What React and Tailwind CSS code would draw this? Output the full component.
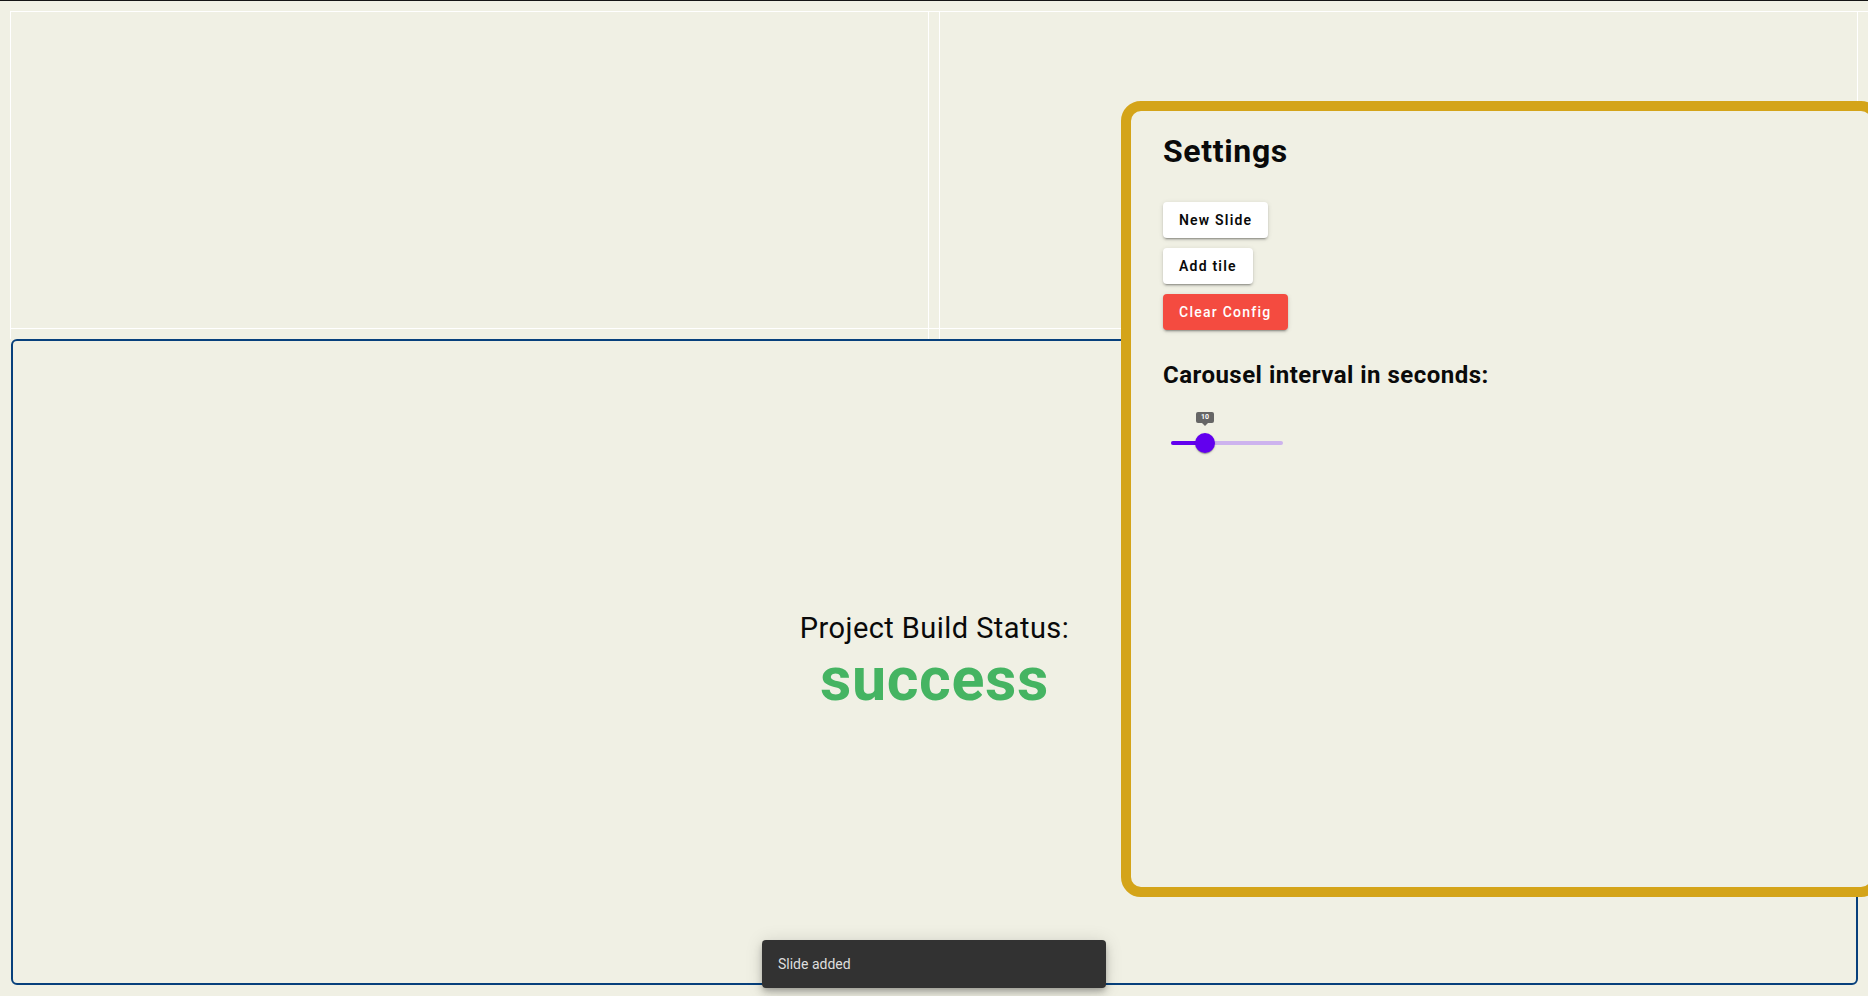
import { useState } from "react";

export default function App() {
  const [interval] = useState(10);

  return (
    <div className="relative h-[996px] w-full overflow-hidden border-t border-[#141414] bg-[#f0f0e4] font-['Roboto',sans-serif]">
      {/* Tile grid outline */}
      <div className="ml-[10px] mt-[10px] border-t border-white">
        <div className="flex gap-[10px]">
          <div className="h-[316px] w-[919px] border-x border-white" />
          <div className="h-[316px] w-[919px] border-x border-white" />
        </div>
        <div className="h-px w-[1848px] bg-white" />
        <div className="flex gap-[10px]">
          <div className="h-[10px] w-[919px] border-x border-white" />
          <div className="h-[10px] w-[919px] border-x border-white" />
        </div>
      </div>

      {/* Build status tile */}
      <div className="ml-[11px] flex h-[646px] w-[1847px] items-center justify-center rounded-[6px] border-2 border-[#07407c]">
        <div className="flex flex-col items-center pb-[8px]">
          <span className="text-[29px] leading-[42px] tracking-[0.015em] text-[#0a0a0a]">Project Build Status:</span>
          <span className="text-[61px] font-bold leading-[60px] tracking-[0.01em] text-[#45b462]">success</span>
        </div>
      </div>

      {/* Settings panel */}
      <div className="absolute left-[1121px] top-[100px] h-[796px] w-[760px] rounded-[20px] border-[10px] border-[#d4a419] bg-[#f0f0e4] pl-[32px] pt-[21px]">
        <h2 className="text-[32px] font-bold leading-[38px] tracking-[0.02em] text-[#0a0a0a]">Settings</h2>

        <div className="mt-[32px] flex flex-col items-start gap-[10px]">
          <button className="h-[36px] rounded-[4px] bg-white px-[16px] text-[14px] font-semibold tracking-[1.2px] text-[#0a0a0a] shadow-[0_3px_1px_-2px_rgba(0,0,0,0.2),0_2px_2px_0_rgba(0,0,0,0.14),0_1px_5px_0_rgba(0,0,0,0.12)]">
            New Slide
          </button>
          <button className="h-[36px] rounded-[4px] bg-white px-[16px] text-[14px] font-semibold tracking-[1.2px] text-[#0a0a0a] shadow-[0_3px_1px_-2px_rgba(0,0,0,0.2),0_2px_2px_0_rgba(0,0,0,0.14),0_1px_5px_0_rgba(0,0,0,0.12)]">
            Add tile
          </button>
          <button className="h-[36px] rounded-[4px] bg-[#f44b40] px-[16px] text-[14px] font-medium tracking-[1.25px] text-white shadow-[0_3px_1px_-2px_rgba(0,0,0,0.2),0_2px_2px_0_rgba(0,0,0,0.14),0_1px_5px_0_rgba(0,0,0,0.12)]">
            Clear Config
          </button>
        </div>

        <h3 className="mt-[31px] text-[24px] font-bold leading-[28px] tracking-[0.02em] text-[#0a0a0a]">
          Carousel interval in seconds:
        </h3>

        {/* Slider */}
        <div className="relative ml-[8px] mt-[23px] h-[42px] w-[112px]">
          <div className="absolute left-[25px] top-0 flex flex-col items-center">
            <div className="flex h-[11px] w-[18px] items-center justify-center rounded-[2px] bg-[#666] text-[7px] font-bold leading-none text-white">
              {interval}
            </div>
            <div className="h-0 w-0 border-x-[3px] border-t-[3px] border-x-transparent border-t-[#666]" />
          </div>
          <div className="absolute left-0 top-[29px] h-[4px] w-[112px] rounded-full bg-[#cdb3ee]" />
          <div className="absolute left-0 top-[29px] h-[4px] w-[34px] rounded-full bg-[#6200ee]" />
          <div className="absolute left-[24px] top-[21px] h-[20px] w-[20px] rounded-full bg-[#6200ee] shadow-[0_2px_1px_-1px_rgba(0,0,0,0.2),0_1px_1px_0_rgba(0,0,0,0.14),0_1px_3px_0_rgba(0,0,0,0.12)]" />
        </div>
      </div>

      {/* Snackbar */}
      <div className="absolute bottom-[8px] left-1/2 flex h-[48px] w-[344px] -translate-x-1/2 items-center rounded-[4px] bg-[#323232] px-[16px] text-[14px] text-[#dedede] shadow-[0_3px_5px_-1px_rgba(0,0,0,0.2),0_6px_10px_0_rgba(0,0,0,0.14),0_1px_18px_0_rgba(0,0,0,0.12)]">
        Slide added
      </div>
    </div>
  );
}
